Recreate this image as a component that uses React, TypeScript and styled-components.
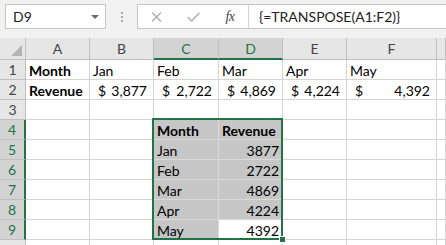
import React from 'react';
import styled, { createGlobalStyle } from 'styled-components';

const GREEN = '#217346';

const GlobalStyle = createGlobalStyle`
  html, body {
    margin: 0;
    padding: 0;
    background: #ffffff;
    font-family: Lato, "Open Sans", sans-serif;
  }
`;

const Window = styled.div`
  width: 446px;
  height: 245px;
  overflow: hidden;
  background: #ffffff;
`;

const Toolbar = styled.div`
  display: flex;
  align-items: flex-start;
  height: 38px;
  box-sizing: border-box;
  padding: 4px 0 0 5px;
  background: #f1f1f1;
`;

const NameBox = styled.div`
  display: flex;
  align-items: center;
  justify-content: space-between;
  width: 101px;
  height: 25px;
  box-sizing: border-box;
  padding: 0 6px 0 7px;
  background: #ffffff;
  border: 1px solid #c6c6c6;
  font-size: 14px;
  color: #222;
`;

const Caret = styled.span`
  width: 0;
  height: 0;
  border-left: 4px solid transparent;
  border-right: 4px solid transparent;
  border-top: 4px solid #6a6a6a;
`;

const Grip = styled.div`
  width: 31px;
  height: 25px;
  display: flex;
  flex-direction: column;
  align-items: center;
  justify-content: center;
  gap: 2px;

  span {
    width: 2px;
    height: 2px;
    background: #a8a8a8;
  }
`;

const FormulaBox = styled.div`
  flex: 1;
  display: flex;
  align-items: center;
  height: 25px;
  box-sizing: border-box;
  background: #ffffff;
  border: 1px solid #c6c6c6;
  border-right: none;
`;

const IconSlot = styled.div<{ $w: number }>`
  width: ${(p) => p.$w}px;
  height: 100%;
  display: flex;
  align-items: center;
  justify-content: center;
  flex-shrink: 0;
`;

const Fx = styled.span`
  font-family: "Liberation Serif", serif;
  font-style: italic;
  font-size: 14px;
  color: #444;
  letter-spacing: -0.5px;
`;

const Divider = styled.div`
  width: 1px;
  height: 100%;
  background: #d4d4d4;
`;

const FormulaText = styled.div`
  padding-left: 10px;
  font-size: 14px;
  color: #222;
  white-space: nowrap;
`;

const SheetArea = styled.div`
  position: relative;
`;

const Sheet = styled.div`
  display: grid;
  grid-template-columns: 26px 64px 64px 65px 64px 64px 90px 1fr;
  grid-template-rows: 22px repeat(10, 20px);
`;

const Corner = styled.div`
  position: relative;
  background: #e6e6e6;
  border-right: 1px solid #bfbfbf;
  border-bottom: 1px solid #bfbfbf;
  box-sizing: border-box;

  &::after {
    content: '';
    position: absolute;
    right: 3px;
    bottom: 3px;
    width: 0;
    height: 0;
    border-left: 11px solid transparent;
    border-bottom: 11px solid #b4b4b4;
  }
`;

const ColHeader = styled.div<{ $active?: boolean }>`
  display: flex;
  align-items: center;
  justify-content: center;
  box-sizing: border-box;
  background: ${(p) => (p.$active ? '#d3d3d3' : '#e6e6e6')};
  border-right: 1px solid #bfbfbf;
  border-bottom: ${(p) => (p.$active ? `2px solid ${GREEN}` : '1px solid #bfbfbf')};
  padding-top: ${(p) => (p.$active ? '1px' : '0')};
  font-size: 14px;
  color: ${(p) => (p.$active ? GREEN : '#444')};
`;

const RowHeader = styled.div<{ $active?: boolean }>`
  display: flex;
  align-items: center;
  justify-content: center;
  box-sizing: border-box;
  background: ${(p) => (p.$active ? '#d3d3d3' : '#e6e6e6')};
  border-right: ${(p) => (p.$active ? `2px solid ${GREEN}` : '1px solid #bfbfbf')};
  border-bottom: 1px solid #bfbfbf;
  font-size: 14px;
  color: ${(p) => (p.$active ? GREEN : '#444')};
`;

const Cell = styled.div<{ $right?: boolean; $bold?: boolean; $selected?: boolean }>`
  display: flex;
  align-items: center;
  justify-content: ${(p) => (p.$right ? 'flex-end' : 'flex-start')};
  box-sizing: border-box;
  padding: 1px 3px 0 3px;
  background: ${(p) => (p.$selected ? '#c6c6c6' : '#ffffff')};
  border-right: 1px solid ${(p) => (p.$selected ? '#dadada' : '#d4d4d4')};
  border-bottom: 1px solid ${(p) => (p.$selected ? '#dadada' : '#d4d4d4')};
  font-size: 14px;
  font-weight: ${(p) => (p.$bold ? 700 : 400)};
  color: #000;
  white-space: nowrap;
  overflow: hidden;
`;

const Money = styled(Cell)`
  justify-content: space-between;
  padding: 1px 6px 0 8px;
`;

// green outline around C4:D9, drawn over the cells
const Selection = styled.div`
  position: absolute;
  left: 152px;
  top: 80px;
  width: 131px;
  height: 122px;
  box-sizing: border-box;
  border: 2px solid ${GREEN};
  pointer-events: none;
`;

const FillHandle = styled.div`
  position: absolute;
  right: -5px;
  bottom: -5px;
  width: 5px;
  height: 5px;
  background: ${GREEN};
  border: 1px solid #ffffff;
`;

const columns = ['A', 'B', 'C', 'D', 'E', 'F', ''];
const months = ['Jan', 'Feb', 'Mar', 'Apr', 'May'];
const revenue = ['3,877', '2,722', '4,869', '4,224', '4,392'];
const plain = ['3877', '2722', '4869', '4224', '4392'];

const isSelected = (row: number, col: number) => row >= 4 && row <= 9 && (col === 2 || col === 3);

function renderCell(row: number, col: number) {
  const key = `${row}-${col}`;
  const selected = isSelected(row, col) && !(row === 9 && col === 3);

  if (row === 1) {
    if (col === 0) return <Cell key={key} $bold>Month</Cell>;
    if (col >= 1 && col <= 5) return <Cell key={key}>{months[col - 1]}</Cell>;
  }
  if (row === 2) {
    if (col === 0) return <Cell key={key} $bold>Revenue</Cell>;
    if (col >= 1 && col <= 5)
      return (
        <Money key={key}>
          <span>$</span>
          <span>{revenue[col - 1]}</span>
        </Money>
      );
  }
  if (row === 4 && col === 2) return <Cell key={key} $bold $selected>Month</Cell>;
  if (row === 4 && col === 3) return <Cell key={key} $bold $selected>Revenue</Cell>;
  if (row >= 5 && row <= 9) {
    if (col === 2) return <Cell key={key} $selected={selected}>{months[row - 5]}</Cell>;
    if (col === 3)
      return (
        <Cell key={key} $right $selected={selected}>
          {plain[row - 5]}
        </Cell>
      );
  }
  return <Cell key={key} $selected={selected} />;
}

export default function App() {
  const rows = Array.from({ length: 10 }, (_, i) => i + 1);

  return (
    <Window>
      <GlobalStyle />
      <Toolbar>
        <NameBox>
          <span>D9</span>
          <Caret />
        </NameBox>
        <Grip>
          <span />
          <span />
          <span />
        </Grip>
        <FormulaBox>
          <IconSlot $w={37}>
            <svg width="11" height="10" viewBox="0 0 11 10">
              <path d="M1 0.5 L10 9.5 M10 0.5 L1 9.5" stroke="#ababab" strokeWidth="1.3" fill="none" />
            </svg>
          </IconSlot>
          <IconSlot $w={37}>
            <svg width="13" height="10" viewBox="0 0 13 10">
              <path d="M0.8 5.2 L4.6 9 L12.4 0.8" stroke="#ababab" strokeWidth="1.4" fill="none" />
            </svg>
          </IconSlot>
          <IconSlot $w={36}>
            <Fx>fx</Fx>
          </IconSlot>
          <Divider />
          <FormulaText>{'{=TRANSPOSE(A1:F2)}'}</FormulaText>
        </FormulaBox>
      </Toolbar>
      <SheetArea>
        <Sheet>
          <Corner />
          {columns.map((c, i) => (
            <ColHeader key={`h${i}`} $active={c === 'C' || c === 'D'}>
              {c}
            </ColHeader>
          ))}
          {rows.map((r) => (
            <React.Fragment key={r}>
              {/* row 10 sits below the visible edge, its number is not shown */}
              <RowHeader $active={r >= 4 && r <= 9}>{r < 10 ? r : ''}</RowHeader>
              {columns.map((_, col) => renderCell(r, col))}
            </React.Fragment>
          ))}
        </Sheet>
        <Selection>
          <FillHandle />
        </Selection>
      </SheetArea>
    </Window>
  );
}
